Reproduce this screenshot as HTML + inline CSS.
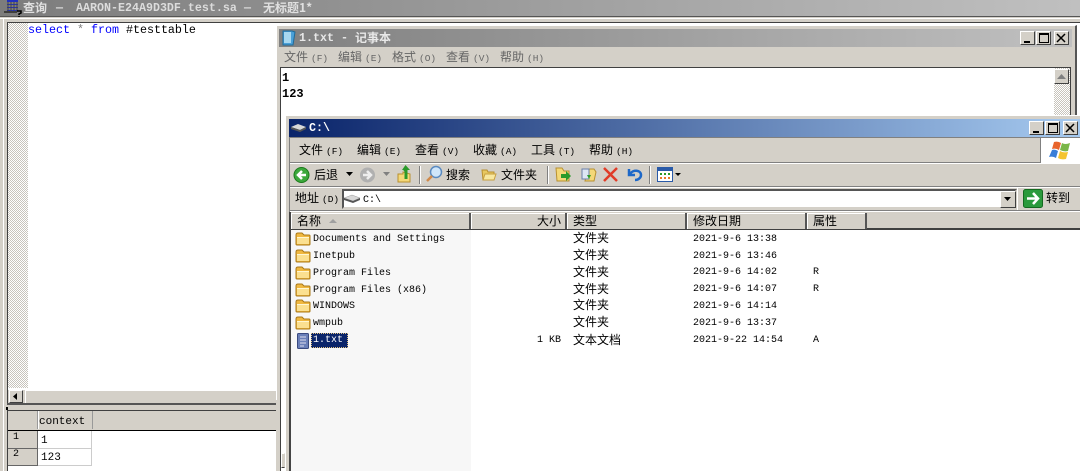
<!DOCTYPE html>
<html><head><meta charset="utf-8"><style>
html,body{margin:0;padding:0;width:1080px;height:471px;overflow:hidden;background:#fff}
body{position:relative;font-family:"Liberation Mono","WenQuanYi Zen Hei",monospace;font-size:12px;color:#000}
.a{position:absolute}
.t{position:absolute;white-space:nowrap;line-height:14px}
.cj{font-family:"WenQuanYi Zen Hei","Noto Sans CJK SC",sans-serif;font-size:12px}
.m{font-family:"Liberation Mono","WenQuanYi Zen Hei",monospace;font-size:10px}
.cj .m{font-size:9.5px;margin-left:3px}
.b{position:absolute;width:13px;height:12px;background:#d4d0c8;border:1px solid;border-color:#fff #404040 #404040 #fff;box-sizing:content-box}
.h{position:absolute;top:213px;height:16px;background:#d4d0c8;border-right:2px solid #555;box-shadow:inset 1px 1px #fff;box-sizing:border-box}
.ti{color:#dcdcdc;font-weight:bold;font-size:11.67px}
</style></head><body>
<!-- query window -->
<div class="a" style="left:0;top:0;width:1080px;height:16px;background:linear-gradient(90deg,#7c7c7c,#c0c0c0)"></div>
<div class="a" style="left:0;top:16px;width:1080px;height:1px;background:#555"></div>
<div class="a" style="left:0;top:17px;width:1080px;height:5px;background:#d4d0c8"></div>
<div class="a" style="left:0;top:18px;width:1080px;height:1px;background:#fff"></div>
<svg class="a" style="left:4px;top:0" width="20" height="17"><path d="M3 0h11v2H3zM3 4h11v1H3zM3 7h11v1H3zM3 10h11v1H3z" fill="#2030c0"/><path d="M4 2v9M7 2v9M10 2v9M13 2v9" stroke="#444"/><path d="M0 12h13" stroke="#000"/><path d="M13 11h4v2l-2 1v1M15 16v1" stroke="#000" fill="none" stroke-width="1.500"/></svg>
<div class="t cj" style="left:23px;top:1px;color:#e0e0e0;font-weight:bold">查询</div>
<div class="t ti" style="left:56px;top:1px">—</div>
<div class="t ti" style="left:76px;top:1px">AARON-E24A9D3DF.test.sa</div>
<div class="t ti" style="left:244px;top:1px">—</div>
<div class="t cj" style="left:263px;top:1px;color:#e0e0e0;font-weight:bold">无标题1*</div>
<!-- editor -->
<div class="a" style="left:0;top:22px;width:7px;height:449px;background:#d4d0c8"></div>
<div class="a" style="left:3px;top:19px;width:1px;height:452px;background:#fff"></div>
<div class="a" style="left:7px;top:22px;width:1073px;height:1px;background:#404040"></div>
<div class="a" style="left:7px;top:22px;width:1px;height:449px;background:#404040"></div>
<div class="a" style="left:8px;top:23px;width:20px;height:365px;background:repeating-conic-gradient(#c8c4bc 0 25%,#fff 0 50%) 0 0/2px 2px"></div>
<div class="t" style="left:28px;top:23px;font-size:11.67px;color:#000"><span style="color:#0000ff">select</span> <span style="color:#808080">*</span> <span style="color:#0000ff">from</span> #testtable</div>
<!-- h scrollbar -->
<div class="a" style="left:8px;top:389px;width:268px;height:14px;background:#d4d0c8;border-top:1px solid #fff"></div>
<div class="b" style="left:9px;top:390px;width:12px;height:11px"></div>
<svg class="a" style="left:13px;top:392px" width="6" height="10"><path d="M4 1v7L0 4.500z" fill="#000"/></svg>
<div class="a" style="left:25px;top:390px;width:251px;height:12px;background:#d4d0c8;border-left:1px solid #fff;border-top:1px solid #fff;border-bottom:1px solid #404040"></div>
<div class="a" style="left:7px;top:403px;width:269px;height:2px;background:#555"></div>
<div class="a" style="left:7px;top:405px;width:269px;height:5px;background:#d4d0c8"></div>
<div class="a" style="left:6px;top:407px;width:2px;height:3px;background:#000"></div>
<!-- grid -->
<div class="a" style="left:7px;top:410px;width:269px;height:1px;background:#404040"></div>
<div class="a" style="left:8px;top:411px;width:268px;height:19px;background:#d4d0c8;border-bottom:1px solid #000"></div>
<div class="a" style="left:8px;top:411px;width:29px;height:18px;border-right:1px solid #999"></div>
<div class="a" style="left:38px;top:411px;width:53px;height:18px;border-right:1px solid #999;border-left:1px solid #fff"></div>
<div class="t m" style="left:39px;top:415px;font-size:11px">context</div>
<div class="a" style="left:8px;top:431px;width:29px;height:17px;background:#d4d0c8;border-right:1px solid #666;border-bottom:1px solid #666"></div>
<div class="a" style="left:8px;top:449px;width:29px;height:16px;background:#d4d0c8;border-right:1px solid #666;border-bottom:1px solid #666"></div>
<div class="a" style="left:38px;top:431px;width:53px;height:17px;border-right:1px solid #ccc;border-bottom:1px solid #ccc"></div>
<div class="a" style="left:38px;top:449px;width:53px;height:16px;border-right:1px solid #ccc;border-bottom:1px solid #ccc"></div>
<div class="t m" style="left:13px;top:431px">1</div>
<div class="t m" style="left:13px;top:448px">2</div>
<div class="t m" style="left:41px;top:434px;font-size:11px">1</div>
<div class="t m" style="left:41px;top:451px;font-size:11px">123</div>
<!-- notepad -->
<div class="a" style="left:276px;top:25px;width:801px;height:446px;background:#d4d0c8;border-right:2px solid #555;border-left:1px solid #fff;border-top:1px solid #fff;box-sizing:border-box"></div>
<div class="a" style="left:279px;top:29px;width:793px;height:18px;background:linear-gradient(90deg,#808080,#c0c0c0)"></div>
<svg class="a" style="left:281px;top:30px" width="16" height="16"><path d="M2 1h9l3 1-2 13H2z" fill="#4aa0d8" stroke="#1e6a9a"/><path d="M3 2h7v11H3z" fill="#a8d8f0"/></svg>
<div class="t ti" style="left:299px;top:31px;color:#e8e8e8">1.txt -</div>
<div class="t cj" style="left:355px;top:31px;color:#e8e8e8;font-weight:bold">记事本</div>
<div class="b" style="left:1020px;top:31px"></div><div class="a" style="left:1024px;top:41px;width:6px;height:2px;background:#000"></div>
<div class="b" style="left:1036px;top:31px"></div><div class="a" style="left:1039px;top:33px;width:8px;height:7px;border:1px solid #000;border-top-width:2px;box-sizing:content-box"></div>
<div class="b" style="left:1054px;top:31px"></div><svg class="a" style="left:1056px;top:33px" width="10" height="10"><path d="M1 1l8 8M9 1l-8 8" stroke="#000" stroke-width="1.500"/></svg>
<div class="t cj" style="left:284px;top:50px;color:#666">文件<span class="m">(F)</span></div>
<div class="t cj" style="left:338px;top:50px;color:#666">编辑<span class="m">(E)</span></div>
<div class="t cj" style="left:392px;top:50px;color:#666">格式<span class="m">(O)</span></div>
<div class="t cj" style="left:446px;top:50px;color:#666">查看<span class="m">(V)</span></div>
<div class="t cj" style="left:500px;top:50px;color:#666">帮助<span class="m">(H)</span></div>
<div class="a" style="left:280px;top:67px;width:791px;height:1px;background:#404040"></div>
<div class="a" style="left:280px;top:68px;width:1px;height:403px;background:#404040"></div>
<div class="a" style="left:281px;top:68px;width:773px;height:403px;background:#fff"></div>
<div class="a" style="left:1054px;top:68px;width:16px;height:47px;background:repeating-conic-gradient(#c8c4bc 0 25%,#fff 0 50%) 0 0/2px 2px"></div>
<div class="a" style="left:1070px;top:68px;width:1px;height:47px;background:#404040"></div>
<div class="b" style="left:1054px;top:69px;width:13px;height:13px"></div>
<svg class="a" style="left:1056px;top:73px" width="12" height="8"><path d="M1 6h9L5.500 1z" fill="#808080"/></svg>
<div class="t" style="left:282px;top:71px;font-weight:bold;font-size:12px">1</div>
<div class="t" style="left:282px;top:87px;font-weight:bold;font-size:12px">123</div>
<div class="a" style="left:281px;top:453px;width:4px;height:15px;background:#d4d0c8;border:1px solid;border-color:#fff transparent #404040 #fff;box-sizing:border-box"></div>
<!-- explorer -->
<div class="a" style="left:285px;top:115px;width:795px;height:356px;background:#d4d0c8;border-top:1px solid #fff;border-left:1px solid #fff;box-sizing:border-box"></div>
<div class="a" style="left:289px;top:119px;width:791px;height:18px;background:linear-gradient(90deg,#0a246a,#a6caf0)"></div>
<svg class="a" style="left:291px;top:122px" width="16" height="12"><path d="M0 5l7-3 8 3-6 3z" fill="#d8d8d8"/><path d="M0 5v2l9 3 6-3V5L9 8z" fill="#555"/></svg>
<div class="t ti" style="left:309px;top:121px;color:#fff">C:\</div>
<div class="b" style="left:1029px;top:121px"></div><div class="a" style="left:1033px;top:131px;width:6px;height:2px;background:#000"></div>
<div class="b" style="left:1045px;top:121px"></div><div class="a" style="left:1048px;top:123px;width:8px;height:7px;border:1px solid #000;border-top-width:2px;box-sizing:content-box"></div>
<div class="b" style="left:1063px;top:121px"></div><svg class="a" style="left:1065px;top:123px" width="10" height="10"><path d="M1 1l8 8M9 1l-8 8" stroke="#000" stroke-width="1.500"/></svg>
<div class="a" style="left:289px;top:137px;width:791px;height:1px;background:#808080"></div>
<div class="a" style="left:1040px;top:138px;width:40px;height:25px;background:#fff;border-left:1px solid #808080;box-sizing:border-box"></div>
<svg class="a" style="left:1049px;top:141px" width="23" height="20"><path d="M5 1q4-1 7 1l-2 7q-3-2-7-1z" fill="#e8642c"/><path d="M13 2q3 2 8 0l-2 8q-4 1-8-1z" fill="#7ab648"/><path d="M3 9q3-1 6 1l-2 7q-3-2-7-1z" fill="#3a7ed8"/><path d="M11 10q3 2 8 1l-2 7q-5 1-8-1z" fill="#f4c430"/></svg>
<div class="t cj" style="left:299px;top:143px">文件<span class="m">(F)</span></div>
<div class="t cj" style="left:357px;top:143px">编辑<span class="m">(E)</span></div>
<div class="t cj" style="left:415px;top:143px">查看<span class="m">(V)</span></div>
<div class="t cj" style="left:473px;top:143px">收藏<span class="m">(A)</span></div>
<div class="t cj" style="left:531px;top:143px">工具<span class="m">(T)</span></div>
<div class="t cj" style="left:589px;top:143px">帮助<span class="m">(H)</span></div>
<div class="a" style="left:289px;top:162px;width:751px;height:1px;background:#808080"></div>
<div class="a" style="left:289px;top:163px;width:791px;height:1px;background:#fff"></div>
<!-- toolbar -->
<svg class="a" style="left:293px;top:166px" width="18" height="18"><circle cx="8.500" cy="9" r="7.500" fill="#3ca83c" stroke="#1a7a1a"/><path d="M13 9H6M9 5L5 9l4 4" stroke="#fff" stroke-width="2.500" fill="none"/></svg>
<div class="t cj" style="left:314px;top:168px">后退</div>
<svg class="a" style="left:346px;top:172px" width="8" height="5"><path d="M0 0h7L3.500 4z" fill="#000"/></svg>
<svg class="a" style="left:359px;top:166px" width="18" height="18"><circle cx="8.500" cy="9" r="7.500" fill="#b0b0b0"/><path d="M4 9h7M8 5l4 4-4 4" stroke="#eee" stroke-width="2.500" fill="none"/></svg>
<svg class="a" style="left:383px;top:172px" width="8" height="5"><path d="M0 0h7L3.500 4z" fill="#808080"/></svg>
<svg class="a" style="left:397px;top:165px" width="16" height="19"><path d="M1 9h5V7l7 2v8H1z" fill="#f4d878" stroke="#b89030"/><path d="M8.500 0l4.500 5h-2.500v9h-3V7C7 5 6 5 5 5z" fill="#2a9a2a"/></svg>
<div class="a" style="left:419px;top:166px;width:1px;height:18px;background:#808080;box-shadow:1px 0 #fff"></div>
<svg class="a" style="left:425px;top:165px" width="18" height="18"><circle cx="11" cy="7" r="5.500" fill="#cfe6fa" stroke="#5a8ac0" stroke-width="1.500"/><path d="M7 11l-5 5" stroke="#d08a4a" stroke-width="2.500"/></svg>
<div class="t cj" style="left:446px;top:168px">搜索</div>
<svg class="a" style="left:481px;top:167px" width="16" height="15"><path d="M1 3h5l1 2h6v8H2z" fill="#e8c860" stroke="#b89030"/><path d="M4 7h11l-2 6H2z" fill="#f8e8a0" stroke="#c8a040"/></svg>
<div class="t cj" style="left:501px;top:168px">文件夹</div>
<div class="a" style="left:547px;top:166px;width:1px;height:18px;background:#808080;box-shadow:1px 0 #fff"></div>
<svg class="a" style="left:555px;top:166px" width="17" height="17"><path d="M1 2h6l2 3h5v10H2z" fill="#f4d878" stroke="#b89030"/><path d="M6 8h5V5l5 5-5 5v-3H6z" fill="#2a9a2a"/></svg>
<svg class="a" style="left:580px;top:166px" width="17" height="17"><path d="M8 3h6l2 3-2 9H5z" fill="#f4d878" stroke="#b89030"/><path d="M2 3h7v10H2z" fill="#dde6f4" stroke="#6a7fa8"/><path d="M7 9h4l-2 4z" fill="#2a9a2a"/></svg>
<svg class="a" style="left:603px;top:167px" width="16" height="15"><path d="M1 1l13 13M14 1L1 14" stroke="#e03c28" stroke-width="2.500"/></svg>
<svg class="a" style="left:626px;top:166px" width="17" height="16"><path d="M3 3v6h6M4 8c3-5 11-4 11 1 0 3-3 5-6 5" stroke="#1e68c8" stroke-width="2.500" fill="none"/></svg>
<div class="a" style="left:649px;top:166px;width:1px;height:18px;background:#808080;box-shadow:1px 0 #fff"></div>
<svg class="a" style="left:657px;top:167px" width="26" height="15"><path d="M.500.500h15v14H.500z" fill="#fff" stroke="#2a5aa8"/><path d="M1 1h14v3H1z" fill="#2a5aa8"/><path d="M3 6h2v2H3zM7 6h2v2H7zM11 6h2v2h-2z" fill="#2a9a2a"/><path d="M3 10h2v2H3zM7 10h2v2H7zM11 10h2v2h-2z" fill="#e87a28"/><path d="M18 6h6l-3 3z" fill="#000"/></svg>
<div class="a" style="left:289px;top:186px;width:791px;height:1px;background:#808080"></div>
<div class="a" style="left:289px;top:187px;width:791px;height:1px;background:#fff"></div>
<!-- address -->
<div class="t cj" style="left:295px;top:191px">地址<span class="m">(D)</span></div>
<div class="a" style="left:342px;top:189px;width:675px;height:20px;background:#fff;border:2px solid;border-color:#555 #d4d0c8 #d4d0c8 #555;box-sizing:border-box"></div>
<svg class="a" style="left:344px;top:193px" width="17" height="12"><path d="M0 5l8-3 8 3-7 3z" fill="#d8d8d8" stroke="#999" stroke-width=".5"/><path d="M0 5v2l9 3 7-3V5L9 8z" fill="#555"/></svg>
<div class="t" style="left:363px;top:194px;font-size:10px">C:\</div>
<div class="b" style="left:1000px;top:191px;width:14px;height:15px"></div>
<svg class="a" style="left:1003px;top:197px" width="10" height="6"><path d="M1 0h7L4.500 4z" fill="#000"/></svg>
<div class="a" style="left:1017px;top:188px;width:1px;height:22px;background:#fff"></div>
<svg class="a" style="left:1023px;top:189px" width="21" height="20"><rect x=".5" y=".5" width="19" height="18" rx="2" fill="#2a9a3c" stroke="#146a20"/><path d="M4 9.500h10M10 4l5 5.500-5 5.500" stroke="#fff" stroke-width="2.500" fill="none"/></svg>
<div class="t cj" style="left:1046px;top:191px">转到</div>
<div class="a" style="left:289px;top:210px;width:791px;height:1px;background:#808080"></div>
<div class="a" style="left:289px;top:211px;width:791px;height:1px;background:#fff"></div>
<!-- header -->
<div class="a" style="left:291px;top:212px;width:789px;height:18px;background:#d4d0c8;border-bottom:2px solid #404040;box-sizing:border-box"></div>
<div class="h" style="left:291px;width:180px"></div>
<div class="h" style="left:471px;width:96px"></div>
<div class="h" style="left:567px;width:120px"></div>
<div class="h" style="left:687px;width:120px"></div>
<div class="h" style="left:807px;width:60px"></div>
<div class="t cj" style="left:297px;top:214px">名称</div>
<svg class="a" style="left:329px;top:218px" width="10" height="6"><path d="M0 5h8L4 1z" fill="#a0a0a0"/></svg>
<div class="t cj" style="left:537px;top:214px">大小</div>
<div class="t cj" style="left:573px;top:214px">类型</div>
<div class="t cj" style="left:693px;top:214px">修改日期</div>
<div class="t cj" style="left:813px;top:214px">属性</div>
<!-- list -->
<div class="a" style="left:291px;top:230px;width:789px;height:241px;background:#fff"></div>
<div class="a" style="left:291px;top:230px;width:180px;height:241px;background:#f7f7f7"></div>
<svg width="0" height="0" style="position:absolute"><defs><symbol id="f" viewBox="0 0 16 14"><path d="M1 3q0-2 2-2h4l2 2h5q1 0 1 1v8q0 1-1 1H2q-1 0-1-1z" fill="#f0b840" stroke="#a87818"/><path d="M2 5h12v7H2z" fill="#fbe090"/><path d="M2 5h12v1H2z" fill="#fff6d0"/></symbol></defs></svg>
<svg class="a" style="left:295px;top:232px" width="16" height="14"><use href="#f"/></svg>
<svg class="a" style="left:295px;top:249px" width="16" height="14"><use href="#f"/></svg>
<svg class="a" style="left:295px;top:266px" width="16" height="14"><use href="#f"/></svg>
<svg class="a" style="left:295px;top:283px" width="16" height="14"><use href="#f"/></svg>
<svg class="a" style="left:295px;top:299px" width="16" height="14"><use href="#f"/></svg>
<svg class="a" style="left:295px;top:316px" width="16" height="14"><use href="#f"/></svg>
<svg class="a" style="left:297px;top:333px" width="13" height="17"><rect x=".5" y=".5" width="11" height="15" rx="1" fill="#6a7fb8" stroke="#3a4a80"/><path d="M3 4h6M3 7h6M3 10h6M3 13h4" stroke="#dde"/></svg>
<div class="t m" style="left:313px;top:233px">Documents and Settings</div>
<div class="t m" style="left:313px;top:250px">Inetpub</div>
<div class="t m" style="left:313px;top:267px">Program Files</div>
<div class="t m" style="left:313px;top:284px">Program Files (x86)</div>
<div class="t m" style="left:313px;top:300px">WINDOWS</div>
<div class="t m" style="left:313px;top:317px">wmpub</div>
<div class="a" style="left:311px;top:333px;width:37px;height:15px;background:#0a246a;outline:1px dotted #e0c080;outline-offset:-1px"></div>
<div class="t m" style="left:313px;top:334px;color:#fff">1.txt</div>
<div class="t cj" style="left:573px;top:231px">文件夹</div>
<div class="t cj" style="left:573px;top:248px">文件夹</div>
<div class="t cj" style="left:573px;top:265px">文件夹</div>
<div class="t cj" style="left:573px;top:282px">文件夹</div>
<div class="t cj" style="left:573px;top:298px">文件夹</div>
<div class="t cj" style="left:573px;top:315px">文件夹</div>
<div class="t cj" style="left:573px;top:333px">文本文档</div>
<div class="t m" style="left:537px;top:334px">1 KB</div>
<div class="t m" style="left:693px;top:233px">2021-9-6 13:38</div>
<div class="t m" style="left:693px;top:250px">2021-9-6 13:46</div>
<div class="t m" style="left:693px;top:266px">2021-9-6 14:02</div>
<div class="t m" style="left:693px;top:283px">2021-9-6 14:07</div>
<div class="t m" style="left:693px;top:300px">2021-9-6 14:14</div>
<div class="t m" style="left:693px;top:317px">2021-9-6 13:37</div>
<div class="t m" style="left:693px;top:334px">2021-9-22 14:54</div>
<div class="t m" style="left:813px;top:266px">R</div>
<div class="t m" style="left:813px;top:283px">R</div>
<div class="t m" style="left:813px;top:334px">A</div>
<!-- edges -->
<div class="a" style="left:276px;top:400px;width:4px;height:71px;background:#d4d0c8"></div>
<div class="a" style="left:289px;top:138px;width:1px;height:74px;background:#808080"></div>
<div class="a" style="left:289px;top:212px;width:2px;height:259px;background:#444"></div>
</body></html>
